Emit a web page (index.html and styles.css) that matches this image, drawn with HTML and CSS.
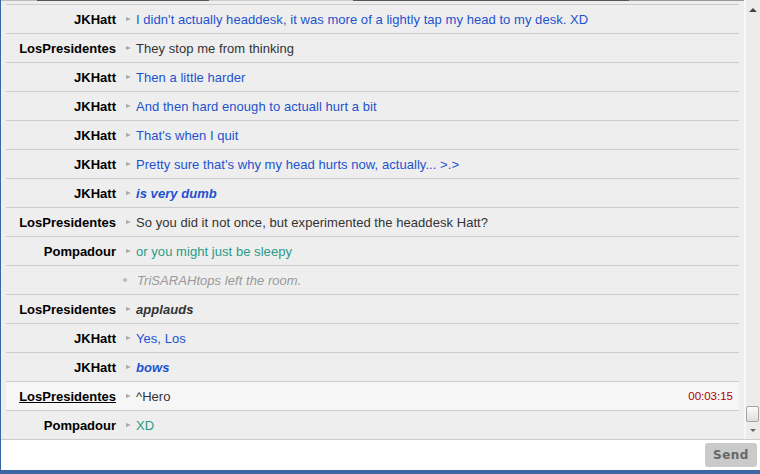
FILE: index.html
```html
<!DOCTYPE html>
<html lang="en">
<head>
  <meta charset="UTF-8" />
  <meta name="viewport" content="width=device-width, initial-scale=1.0" />
  <title>Chat</title>
  <link rel="stylesheet" href="styles.css">
</head>
<body>
  <div class="chat">
    <div class="main">
      <div class="list">
        <div class="scroll-cut"></div>

        <div class="row">
          <span class="name">JKHatt</span><span class="arrow"></span>
          <span class="msg blue">I didn't actually headdesk, it was more of a lightly tap my head to my desk. XD</span>
        </div>
        <div class="row">
          <span class="name">LosPresidentes</span><span class="arrow"></span>
          <span class="msg dark">They stop me from thinking</span>
        </div>
        <div class="row">
          <span class="name">JKHatt</span><span class="arrow"></span>
          <span class="msg blue">Then a little harder</span>
        </div>
        <div class="row">
          <span class="name">JKHatt</span><span class="arrow"></span>
          <span class="msg blue">And then hard enough to actuall hurt a bit</span>
        </div>
        <div class="row">
          <span class="name">JKHatt</span><span class="arrow"></span>
          <span class="msg blue">That's when I quit</span>
        </div>
        <div class="row">
          <span class="name">JKHatt</span><span class="arrow"></span>
          <span class="msg blue">Pretty sure that's why my head hurts now, actually... &gt;.&gt;</span>
        </div>
        <div class="row">
          <span class="name">JKHatt</span><span class="arrow"></span>
          <span class="msg blue action">is very dumb</span>
        </div>
        <div class="row">
          <span class="name">LosPresidentes</span><span class="arrow"></span>
          <span class="msg dark">So you did it not once, but experimented the headdesk Hatt?</span>
        </div>
        <div class="row">
          <span class="name">Pompadour</span><span class="arrow"></span>
          <span class="msg teal">or you might just be sleepy</span>
        </div>
        <div class="row system">
          <span class="name"></span><span class="dot"></span>
          <span class="msg">TriSARAHtops left the room.</span>
        </div>
        <div class="row">
          <span class="name">LosPresidentes</span><span class="arrow"></span>
          <span class="msg dark action">applauds</span>
        </div>
        <div class="row">
          <span class="name">JKHatt</span><span class="arrow"></span>
          <span class="msg blue">Yes, Los</span>
        </div>
        <div class="row">
          <span class="name">JKHatt</span><span class="arrow"></span>
          <span class="msg blue action">bows</span>
        </div>
        <div class="row hover">
          <span class="name">LosPresidentes</span><span class="arrow"></span>
          <span class="msg dark">^Hero</span>
          <span class="time">00:03:15</span>
        </div>
        <div class="row">
          <span class="name">Pompadour</span><span class="arrow"></span>
          <span class="msg teal">XD</span>
        </div>
      </div>

      <div class="scrollbar">
        <span class="sb-up"></span>
        <span class="sb-track"></span>
        <span class="sb-thumb"></span>
        <span class="sb-down"></span>
      </div>
    </div>

    <div class="input-bar">
      <button class="send">Send</button>
    </div>
  </div>
</body>
</html>
```

FILE: styles.css
```css
body {
  margin: 0;
  background: #fff;
  font-family: "Liberation Sans", Arial, sans-serif;
}

.chat {
  width: 759px;
  height: 470px;
  border-left: 1px solid #3b66a3;
  border-bottom: 4px solid #3b66a3;
  display: flex;
  flex-direction: column;
}

.main {
  display: flex;
  background: #eeeeee;
  border-bottom: 1px solid #cccccc;
}

.list {
  flex: 1;
}

/* bottom edge of the rows that scrolled away */
.scroll-cut {
  height: 5px;
  background:
    linear-gradient(to right, #bbb 0, #bbb 36px, #555 36px, #555 208px, #ccc 208px, #ccc 352px, #555 352px, #555 628px, #999 628px) top left / 100% 1px no-repeat,
    linear-gradient(#cccccc, #cccccc) 5px 4px / calc(100% - 10px) 1px no-repeat;
}

.row {
  display: flex;
  align-items: center;
  height: 28px;
  margin: 0 5px;
  border-bottom: 1px solid #cccccc;
  font-size: 13px;
  white-space: nowrap;
}

.row:last-child {
  border-bottom: none;
}

.row.hover {
  background: #f6f6f6;
}

.name {
  width: 110px;
  flex: none;
  text-align: right;
  font-weight: bold;
  color: #000;
}

.row.hover .name {
  text-decoration: underline;
}

.arrow {
  width: 0;
  height: 0;
  margin-left: 10px;
  border-left: 5px solid #a8a8a8;
  border-top: 2px solid transparent;
  border-bottom: 2px solid transparent;
}

.msg {
  margin-left: 5px;
  letter-spacing: 0.05px;
}

.blue { color: #1d52cf; }
.dark { color: #333333; }
.teal { color: #2b9a88; }

.action {
  font-weight: bold;
  font-style: italic;
}

.system .dot {
  width: 4px;
  height: 4px;
  margin-left: 7px;
  border-radius: 50%;
  background: #bbbbbb;
}

.system .msg {
  margin-left: 10px;
  color: #999999;
  font-style: italic;
}

.time {
  margin-left: auto;
  padding-right: 6px;
  font-size: 11.5px;
  color: #b00000;
}

.scrollbar {
  width: 14px;
  flex: none;
  display: flex;
  flex-direction: column;
  align-items: center;
  border-left: 2px solid #f7f7f7;
  background: #ececec;
}

.sb-up {
  margin-top: 8px;
  border-bottom: 4px solid #444;
  border-left: 4px solid transparent;
  border-right: 4px solid transparent;
}

.sb-track {
  flex: 1;
}

.sb-thumb {
  width: 11px;
  height: 14px;
  align-self: flex-end;
  margin-right: 1px;
  border: 1px solid #a3a3a3;
  border-radius: 2px;
  background: linear-gradient(#fbfbfb, #dedede);
}

.sb-down {
  margin: 7px 0 7px;
  border-top: 3px solid #666;
  border-left: 3px solid transparent;
  border-right: 3px solid transparent;
}

.input-bar {
  height: 29px;
  display: flex;
  justify-content: flex-end;
  align-items: center;
  padding-right: 3px;
  background: #fff;
}

.send {
  width: 52px;
  height: 24px;
  border: none;
  border-radius: 3px;
  background: #cacaca;
  color: #666666;
  font-family: "DejaVu Sans", Verdana, sans-serif;
  font-size: 12px;
  font-weight: bold;
  letter-spacing: 0.5px;
  padding: 0;
}
```
